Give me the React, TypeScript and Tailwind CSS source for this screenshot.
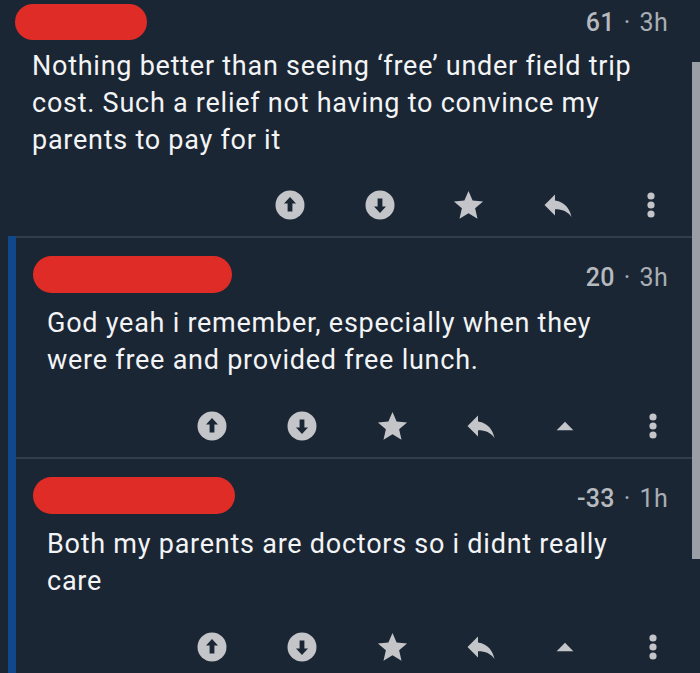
const ICON = "#c3c5c8";
const BG = "#1b2634";

function UpCircle() {
  return (
    <svg width="30" height="30" viewBox="0 0 30 30">
      <circle cx="15" cy="15" r="14.5" fill={ICON} />
      <path d="M15 7 L9 13.5 H12.6 V21.5 H17.4 V13.5 H21 Z" fill={BG} />
    </svg>
  );
}

function DownCircle() {
  return (
    <svg width="30" height="30" viewBox="0 0 30 30">
      <circle cx="15" cy="15" r="14.5" fill={ICON} />
      <path d="M15 23 L9 16.5 H12.6 V8.5 H17.4 V16.5 H21 Z" fill={BG} />
    </svg>
  );
}

function Star() {
  return (
    <svg width="35" height="35" viewBox="0 0 24 24">
      <path d="M12 17.27L18.18 21l-1.64-7.03L22 9.24l-7.19-.61L12 2 9.19 8.63 2 9.24l5.46 4.73L5.82 21z" fill={ICON} />
    </svg>
  );
}

function Reply() {
  return (
    <svg width="36" height="36" viewBox="0 0 24 24">
      <path d="M10 9V5l-7 7 7 7v-4.1c5 0 8.5 1.6 11 5.1-1-5-4-10-11-11z" fill={ICON} />
    </svg>
  );
}

function Collapse() {
  return (
    <svg width="48" height="48" viewBox="0 0 24 24">
      <path d="M7 14.5l5-5 5 5z" fill={ICON} />
    </svg>
  );
}

function Dots() {
  return (
    <svg width="10" height="26" viewBox="0 0 10 26">
      <circle cx="5" cy="4" r="3.6" fill={ICON} />
      <circle cx="5" cy="13" r="3.6" fill={ICON} />
      <circle cx="5" cy="22" r="3.6" fill={ICON} />
    </svg>
  );
}

function Cell({ className, children }: { className: string; children: React.ReactNode }) {
  return <div className={`w-[40px] h-[30px] flex items-center justify-center ${className}`}>{children}</div>;
}

function Score({ points, age }: { points: string; age: string }) {
  return (
    <div className="flex items-baseline text-[25px] leading-none tracking-[0.3px]">
      <span className="font-medium text-[#b6babf]">{points}</span>
      <span className="mx-[9px] text-[#a9aeb4]">·</span>
      <span className="text-[#a9aeb4]">{age}</span>
    </div>
  );
}

function Blob({ className }: { className: string }) {
  return <div className={`rounded-full bg-[#e02c26] ${className}`} />;
}

export default function App() {
  return (
    <div
      className="relative flex flex-col w-[700px] h-[673px] overflow-hidden bg-[#1b2634] text-[#f3f4f5]"
      style={{ fontFamily: "Roboto, 'Noto Sans', sans-serif" }}
    >
      {/* top-level comment */}
      <div>
        <div className="h-[48px] pt-[4px] flex items-start justify-between pr-[32px]">
          <Blob className="ml-[15px] w-[132px] h-[36px]" />
          <div className="mt-[6px]">
            <Score points="61" age="3h" />
          </div>
        </div>
        <p className="pl-[32px] pr-[50px] text-[27px] leading-[37px] tracking-[0.75px]">
          Nothing better than seeing ‘free’ under field trip cost. Such a relief not having to convince my parents
          to pay for it
        </p>
        <div className="mt-[31px] h-[30px] flex">
          <Cell className="ml-[270px]"><UpCircle /></Cell>
          <Cell className="ml-[50px]"><DownCircle /></Cell>
          <Cell className="ml-[48px]"><Star /></Cell>
          <Cell className="ml-[50px]"><Reply /></Cell>
          <Cell className="ml-[53px]"><Dots /></Cell>
        </div>
        <div className="h-[16px]" />
      </div>

      {/* replies */}
      <div className="flex flex-1">
        <div className="ml-[8px] w-[8px] bg-[#10488c] self-stretch" />
        <div className="flex-1">
          {[
            {
              points: "20",
              age: "3h",
              blob: "w-[199px]",
              text: "God yeah i remember, especially when they were free and provided free lunch.",
            },
            {
              points: "-33",
              age: "1h",
              blob: "w-[202px]",
              text: "Both my parents are doctors so i didnt really care",
            },
          ].map((c) => (
            <div key={c.points}>
              <div className="h-[2px] bg-[#313e4e]" />
              <div className="h-[67px] pt-[18px] flex items-start justify-between pr-[32px]">
                <Blob className={`ml-[17px] h-[37px] ${c.blob}`} />
                <div className="mt-[9px]">
                  <Score points={c.points} age={c.age} />
                </div>
              </div>
              <p className="pl-[31px] pr-[50px] text-[27px] leading-[37px] tracking-[0.75px]">{c.text}</p>
              <div className="mt-[32px] h-[30px] flex">
                <Cell className="ml-[176px]"><UpCircle /></Cell>
                <Cell className="ml-[50px]"><DownCircle /></Cell>
                <Cell className="ml-[50px]"><Star /></Cell>
                <Cell className="ml-[49px]"><Reply /></Cell>
                <Cell className="ml-[44px]"><Collapse /></Cell>
                <Cell className="ml-[48px]"><Dots /></Cell>
              </div>
              <div className="h-[16px]" />
            </div>
          ))}
        </div>
      </div>

      {/* scrollbar */}
      <div className="absolute right-0 top-[62px] w-[8px] h-[497px] bg-[#9a9ea5]" />
    </div>
  );
}
